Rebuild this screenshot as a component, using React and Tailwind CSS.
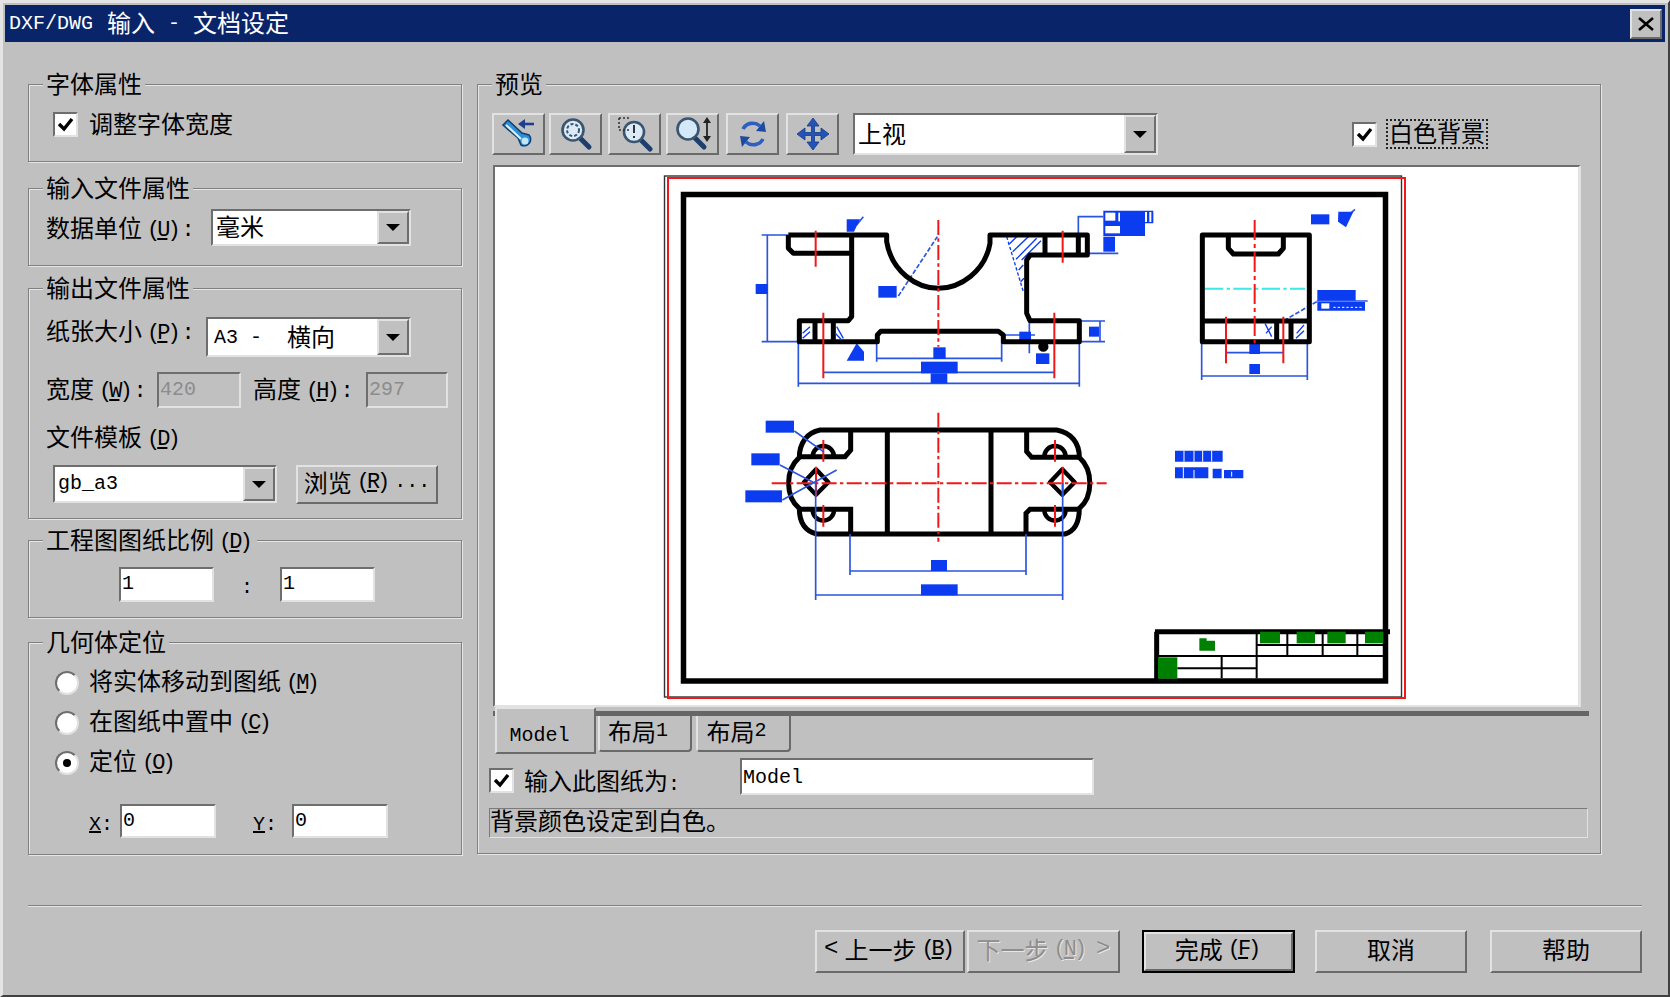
const BLUE = '#0b3cf0';
const LINE = '#2a55e0';
const RED = '#f01818';

function Latin({ children, className = '' }) {
  return <span className={`font-['Liberation_Mono'] text-[20px] ${className}`}>{children}</span>;
}

function Hot({ k, tail = '' }) {
  return (
    <span className="ml-[5px] font-['Liberation_Mono'] text-[22px] tracking-[-3px] align-[1px]">
      (<u>{k}</u>)<span className="ml-[4px]">{tail}</span>
    </span>
  );
}

function Group({ title, className = '', children }) {
  return (
    <div className={`relative border border-[#808080] shadow-[inset_1px_1px_0_#e6e6e6,1px_1px_0_#e6e6e6] ${className}`}>
      <div className="absolute -top-[17px] left-[14px] bg-[#c0c0c0] px-[3px] leading-[30px] whitespace-nowrap">
        {title}
      </div>
      {children}
    </div>
  );
}

function Sunken({ className = '', children }) {
  return (
    <div className={`border-2 border-t-[#6e6e6e] border-l-[#6e6e6e] border-b-[#e2e2e2] border-r-[#e2e2e2] ${className}`}>
      {children}
    </div>
  );
}

function Field({ value, className = '', disabled }) {
  return (
    <Sunken className={`flex items-center pl-[1px] ${disabled ? 'bg-[#c0c0c0]' : 'bg-white'} ${className}`}>
      <Latin className={disabled ? 'text-[#8c8c8c]' : ''}>{value}</Latin>
    </Sunken>
  );
}

function Combo({ className = '', children }) {
  return (
    <Sunken className={`flex bg-white ${className}`}>
      <div className="flex-1 flex items-center pl-[3px] pb-[3px] whitespace-nowrap">{children}</div>
      <div className="w-[32px] flex items-center justify-center bg-[#c0c0c0] border-2 border-t-[#e2e2e2] border-l-[#e2e2e2] border-r-[#6e6e6e] border-b-[#6e6e6e]">
        <div className="w-0 h-0 border-x-[7px] border-x-transparent border-t-[7px] border-t-black" />
      </div>
    </Sunken>
  );
}

function Check({ className = '' }) {
  return (
    <Sunken className={`w-[25px] h-[25px] bg-white flex items-center justify-center shrink-0 ${className}`}>
      <svg width="17" height="15" viewBox="0 0 17 15">
        <path d="M2 7 L7 12 L15 2" fill="none" stroke="#000" strokeWidth="3.4" />
      </svg>
    </Sunken>
  );
}

function Radio({ on, children }) {
  return (
    <div className="flex items-center gap-[10px] h-[24px]">
      <div className="w-[24px] h-[24px] rounded-full bg-white border-2 border-t-[#6e6e6e] border-l-[#6e6e6e] border-b-[#e2e2e2] border-r-[#e2e2e2] flex items-center justify-center">
        {on ? <div className="w-[8px] h-[8px] rounded-full bg-black" /> : null}
      </div>
      <div className="leading-[24px] pb-[2px] whitespace-nowrap">{children}</div>
    </div>
  );
}

function Btn({ className = '', children }) {
  return (
    <div className={`flex items-center justify-center bg-[#c0c0c0] border-2 border-t-[#e2e2e2] border-l-[#e2e2e2] border-r-[#6a6a6a] border-b-[#6a6a6a] whitespace-nowrap ${className}`}>
      {children}
    </div>
  );
}

function Glass({ children }) {
  return (
    <svg width="36" height="36" viewBox="0 0 36 36">
      <path d="M21 21 L31 31" stroke="#1c3f6e" strokeWidth="5" strokeLinecap="round" />
      <circle cx="15" cy="14" r="10.5" fill="#dbeaf6" stroke="#3a5570" strokeWidth="2.6" />
      {children}
    </svg>
  );
}

const toolIcons = [
  <svg key="a" width="36" height="36" viewBox="0 0 36 36">
    <path d="M2 9 L7 4 L21 17 L28 19 A6.5 6.5 0 0 1 20 29 L17 22 Z" fill="#2f8fd8" stroke="#14406e" strokeWidth="1.6" />
    <path d="M5 9 L20 23" stroke="#d7eefb" strokeWidth="2.2" />
    <circle cx="24" cy="25" r="3.5" fill="#bfe6fa" />
    <path d="M33 8 H20" fill="none" stroke="#1c3f8e" strokeWidth="2.6" />
    <path d="M24 3 L17 8 L24 13 Z" fill="#1c3f8e" />
  </svg>,
  <Glass key="b">
    <circle cx="15" cy="14" r="6" fill="none" stroke="#3a5570" strokeWidth="2" strokeDasharray="3 2" />
  </Glass>,
  <svg key="c" width="36" height="36" viewBox="0 0 36 36">
    <path d="M23 23 L33 33" stroke="#1c3f6e" strokeWidth="5" strokeLinecap="round" />
    <circle cx="17" cy="16" r="10" fill="#dbeaf6" stroke="#3a5570" strokeWidth="2.6" />
    <path d="M2 2 H14 M2 2 V14 M2 14 H14" fill="none" stroke="#333" strokeWidth="1.6" strokeDasharray="2 2" />
    <path d="M17 9 V17 M17 20 V22" stroke="#333" strokeWidth="2" />
  </svg>,
  <svg key="d" width="38" height="36" viewBox="0 0 38 36">
    <path d="M20 21 L30 31" stroke="#1c3f6e" strokeWidth="5" strokeLinecap="round" />
    <circle cx="14" cy="13" r="10.5" fill="#d3e8f8" stroke="#3a5570" strokeWidth="2.6" />
    <path d="M33 3 V24" stroke="#222" strokeWidth="1.8" />
    <path d="M29 7 L33 1 L37 7 Z M29 20 L33 26 L37 20 Z" fill="#222" />
  </svg>,
  <svg key="e" width="36" height="36" viewBox="0 0 36 36">
    <path d="M8 13 A11 11 0 0 1 25 10" fill="none" stroke="#2b5fc0" strokeWidth="3.6" />
    <path d="M21 15 L31 16 L29 5 Z" fill="#1e4a9e" />
    <path d="M28 23 A11 11 0 0 1 11 26" fill="none" stroke="#2b5fc0" strokeWidth="3.6" />
    <path d="M15 21 L5 20 L7 31 Z" fill="#1e4a9e" />
  </svg>,
  <svg key="f" width="36" height="36" viewBox="0 0 36 36">
    <path d="M18 2 L24 10 H19.5 V16.5 H26 V12 L34 18 L26 24 V19.5 H19.5 V26 H24 L18 34 L12 26 H16.5 V19.5 H10 V24 L2 18 L10 12 V16.5 H16.5 V10 H12 Z" fill="#2554b8" stroke="#143a86" strokeWidth="0.8" />
  </svg>,
];

const toolGaps = ['', 'ml-[4px]', 'ml-[6px]', 'ml-[5px]', 'ml-[7px]', 'ml-[7px]'];

function FrontView() {
  return (
    <g transform="translate(660 170) scale(0.33333)">
      <g fill="none" stroke={LINE} strokeWidth="5">
        <path d="M305 195 H385 M305 515 H415 M322 195 V515" />
        <path d="M715 378 L832 200" strokeDasharray="14 6" />
        <path d="M1255 195 V140 H1330 M1285 250 H1375 M1255 453 H1335 M1260 515 H1335 M1320 453 V515" />
        <path d="M650 515 V575 M1025 515 V575 M650 565 H1025 M490 607 H1185 M415 640 H1258 M415 515 V650 M1258 515 V650 M1108 450 V550 M1030 495 H1125 M1030 515 H1120" />
        <path d="M590 165 L610 140" />
      </g>
      <g fill={BLUE}>
        <rect x="287" y="342" width="36" height="30" />
        <rect x="655" y="348" width="55" height="35" />
        <path d="M560 148 H600 L582 185 H560 Z" />
        <path d="M1330 122 H1480 V160 H1455 V198 H1330 Z" />
        <rect x="1330" y="200" width="35" height="45" />
        <rect x="1287" y="470" width="30" height="30" />
        <rect x="820" y="532" width="37" height="35" />
        <rect x="783" y="575" width="110" height="35" />
        <rect x="812" y="610" width="50" height="30" />
        <path d="M560 572 L590 520 L612 545 V572 Z" />
        <rect x="1078" y="485" width="35" height="35" />
        <path d="M1128 550 H1168 V582 H1128 Z" />
      </g>
      <g fill="#fff">
        <rect x="1336" y="128" width="30" height="24" />
        <rect x="1336" y="168" width="44" height="22" />
        <rect x="1455" y="126" width="6" height="30" />
        <rect x="1468" y="126" width="6" height="30" />
        <rect x="1375" y="128" width="5" height="26" />
      </g>
      <g stroke={BLUE} strokeWidth="4" fill="none">
        <path d="M1048 222 L1070 200 M1058 245 L1105 200 M1068 268 L1130 205 M1085 270 L1143 212 M1076 300 L1090 285 M1082 335 L1092 325" />
        <path d="M1040 200 L1090 365" strokeDasharray="10 6" />
      </g>
      <g fill="none" stroke="#000" strokeWidth="15" strokeLinejoin="round">
        <path d="M385 195 H680 V215 C695 305 770 355 835 355 C900 355 975 305 990 220 V195 H1282 V255 H1110 L1100 270 V430 L1110 452 H1258 V515 H1030 V495 L1015 484 H662 L652 495 V515 H418 V452 H565 L575 440 V195" />
        <path d="M385 195 V235 L400 250 H570 M1155 195 V255 M1255 195 V255 M465 452 V515 M520 452 V515" />
        <circle cx="1150" cy="530" r="8" />
      </g>
      <g fill="#fff">
        <rect x="428" y="465" width="24" height="42" />
        <rect x="528" y="465" width="24" height="42" />
      </g>
      <g stroke={BLUE} strokeWidth="4" fill="none">
        <path d="M428 490 L450 470 M428 505 L450 485 M530 470 L550 505 M526 490 L545 510" />
      </g>
      <g stroke={RED} strokeWidth="6" fill="none">
        <path d="M835 150 V530" strokeDasharray="45 10 10 10" />
        <path d="M467 182 V290 M1208 182 V278 M490 428 V625 M1183 428 V625" />
      </g>
    </g>
  );
}

function TopView() {
  return (
    <g transform="translate(660 400) scale(0.33333)">
      <g fill="none" stroke="#000" strokeWidth="15">
        <path d="M480 90 H1190 C1235 98 1258 130 1258 172 C1300 210 1300 290 1258 325 C1258 375 1240 395 1215 402 H470 C440 395 418 375 418 325 C375 290 375 210 418 172 C418 130 440 98 480 90 Z" />
        <path d="M682 90 V402 M993 90 V402" />
        <path d="M572 95 V150 L555 170 H420 M572 402 V328 H420 M1100 95 V155 L1115 172 H1258 M1098 402 V340 L1110 328 H1258" />
        <path d="M458 170 A32 32 0 0 1 522 170 M458 330 A32 32 0 0 0 522 330 M1153 170 A32 32 0 0 1 1217 170 M1153 330 A32 32 0 0 0 1217 330" strokeWidth="13" />
        <path d="M468 208 L505 247 L468 284 L432 247 Z M1207 208 L1244 247 L1207 284 L1170 247 Z" strokeWidth="13" strokeLinejoin="round" />
      </g>
      <g fill="none" stroke={RED} strokeWidth="6">
        <path d="M335 250 H1340" strokeDasharray="45 10 10 10" />
        <path d="M835 38 V425" strokeDasharray="45 10 10 10" />
        <path d="M490 120 V185 M490 315 V380 M1185 120 V185 M1185 315 V380 M468 200 V290 M1208 200 V290" />
      </g>
      <g fill="none" stroke={LINE} strokeWidth="5">
        <path d="M467 250 V600 M1208 250 V600 M570 402 V525 M1098 402 V525 M570 513 H1098 M467 585 H1208" />
        <path d="M403 93 L490 155 M360 195 L465 250 M367 300 L530 210" />
      </g>
      <g fill={BLUE}>
        <rect x="813" y="480" width="48" height="33" />
        <rect x="783" y="553" width="110" height="33" />
        <rect x="317" y="62" width="85" height="36" />
        <rect x="274" y="160" width="85" height="36" />
        <rect x="256" y="271" width="110" height="36" />
      </g>
    </g>
  );
}

function SideView() {
  return (
    <g transform="translate(1100 170) scale(0.33333)">
      <g fill="none" stroke={LINE} strokeWidth="5">
        <path d="M305 515 V630 M622 515 V630 M378 548 H550 M303 618 H624" />
        <path d="M650 395 L555 450" strokeDasharray="14 6" />
        <path d="M650 393 H803 M740 140 L765 118" />
      </g>
      <g fill={BLUE}>
        <rect x="633" y="133" width="55" height="30" />
        <path d="M715 125 H760 L738 172 L714 155 Z" />
        <rect x="652" y="360" width="115" height="32" />
        <path d="M652 396 H795 V422 H652 Z" />
        <rect x="448" y="520" width="32" height="32" />
        <rect x="448" y="582" width="32" height="30" />
      </g>
      <rect x="664" y="400" width="24" height="16" fill="#fff" />
      <path d="M700 412 H790" stroke="#fff" strokeWidth="3" strokeDasharray="7 6" />
      <path d="M315 356 H615" stroke="#3ce8e8" strokeWidth="6" strokeDasharray="55 10 10 10" />
      <g fill="none" stroke="#000" strokeWidth="15" strokeLinejoin="round">
        <path d="M307 195 H628 V515 H307 Z" />
        <path d="M385 195 V235 L400 252 H535 L550 235 V195 M307 453 H628 M530 453 V515 M573 453 V515" />
      </g>
      <g stroke={BLUE} strokeWidth="4" fill="none">
        <path d="M495 460 L515 500 M498 490 L515 470 M590 490 L612 465 M588 505 L612 482" />
      </g>
      <g stroke={RED} strokeWidth="6" fill="none">
        <path d="M464 150 V520" strokeDasharray="60 12 12 12" />
        <path d="M378 440 V580 M550 440 V580" />
      </g>
    </g>
  );
}

function TitleBlock() {
  return (
    <g transform="translate(1100 420) scale(0.33333)">
      <g fill={BLUE}>
        <path d="M225 92 H368 V125 H225 Z" />
        <path d="M225 142 H325 V175 H225 Z M338 146 H365 V175 H338 Z M372 150 H430 V175 H372 Z" />
      </g>
      <g stroke="#fff" strokeWidth="3">
        <path d="M252 92 V125 M282 92 V125 M308 92 V125 M335 92 V125 M250 142 V175 M282 150 V175 M395 155 V170" />
      </g>
      <g fill="none" stroke="#000" strokeWidth="6">
        <path d="M470 635 V775 M170 708 H850 M232 745 H470 M365 708 V775 M470 675 H850 M562 640 V708 M668 640 V708 M772 640 V708" />
      </g>
      <path d="M165 635 H870 M170 635 V785" fill="none" stroke="#000" strokeWidth="15" />
      <g fill="#008000">
        <rect x="480" y="635" width="60" height="35" />
        <rect x="590" y="635" width="55" height="35" />
        <rect x="682" y="635" width="55" height="35" />
        <rect x="795" y="635" width="55" height="35" />
        <rect x="174" y="712" width="58" height="64" />
        <path d="M298 655 H320 V662 H345 V692 H298 Z" />
      </g>
    </g>
  );
}

function Drawing() {
  return (
    <svg width="1083" height="538" viewBox="495 167 1083 538" className="block">
      <rect x="495" y="167" width="1083" height="538" fill="#fff" />
      <rect x="664.5" y="176" width="737" height="521" fill="none" stroke="#333" strokeWidth="1.4" />
      <rect x="668" y="178" width="737" height="520" fill="none" stroke="#f01818" strokeWidth="2" />
      <rect x="683.5" y="194.5" width="702" height="486.5" fill="none" stroke="#000" strokeWidth="5.5" />
      <FrontView />
      <TopView />
      <SideView />
      <TitleBlock />
    </svg>
  );
}

export default function App() {
  return (
    <div className="h-screen w-full overflow-hidden bg-[#c0c0c0] text-[24px] text-black font-['Noto_Sans_CJK_SC','Liberation_Sans',sans-serif] border-t-[3px] border-l-[3px] border-r-2 border-b-2 border-t-[#e4e4e4] border-l-[#e4e4e4] border-r-[#404040] border-b-[#404040]">
      <div className="pt-[2px] pl-[2px] pr-[3px]">
        <div className="h-[37px] bg-[#0a246a] text-white flex items-center justify-between pl-[4px] pr-[2px] leading-none">
          <div className="flex items-center whitespace-nowrap">
            <Latin>DXF/DWG</Latin>
            <span className="ml-[14px] pb-[4px]">输入</span>
            <Latin className="ml-[13px]">-</Latin>
            <span className="ml-[13px] pb-[4px]">文档设定</span>
          </div>
          <Btn className="w-[32px] h-[30px] mr-[1px]">
            <svg width="18" height="14" viewBox="0 0 18 14">
              <path d="M2 1 L16 13 M16 1 L2 13" stroke="#000" strokeWidth="2.6" />
            </svg>
          </Btn>
        </div>

        <div className="flex pt-[42px] pl-[23px]">
          <div className="w-[434px] flex flex-col">
            <Group title="字体属性" className="h-[78px] pt-[27px] pl-[24px]">
              <div className="flex items-start gap-[11px]">
                <Check />
                <span className="h-[25px] leading-[21px]">调整字体宽度</span>
              </div>
            </Group>

            <Group title="输入文件属性" className="h-[78px] mt-[26px] pt-[20px] pl-[17px]">
              <div className="flex items-start">
                <div className="w-[165px] h-[36px] leading-[36px] whitespace-nowrap">
                  数据单位<Hot k="U" tail=":" />
                </div>
                <Combo className="w-[200px] h-[37px]">毫米</Combo>
              </div>
            </Group>

            <Group title="输出文件属性" className="h-[231px] mt-[22px] pt-[28px] pl-[17px]">
              <div className="flex items-start">
                <div className="w-[160px] h-[26px] leading-[26px] whitespace-nowrap">
                  纸张大小<Hot k="P" tail=":" />
                </div>
                <Combo className="w-[205px] h-[40px]">
                  <Latin className="ml-[3px] mt-[4px]">A3 -</Latin>
                  <span className="ml-[25px]">横向</span>
                </Combo>
              </div>
              <div className="flex items-center mt-[15px] h-[36px]">
                <div className="w-[111px] pb-[2px] whitespace-nowrap">
                  宽度<Hot k="W" tail=":" />
                </div>
                <Field value="420" disabled className="w-[84px] h-[36px]" />
                <div className="w-[113px] ml-[12px] pb-[2px] whitespace-nowrap">
                  高度<Hot k="H" tail=":" />
                </div>
                <Field value="297" disabled className="w-[82px] h-[36px]" />
              </div>
              <div className="mt-[15px] h-[26px] leading-[26px] whitespace-nowrap">
                文件模板<Hot k="D" />
              </div>
              <div className="flex mt-[16px] ml-[7px]">
                <Combo className="w-[224px] h-[38px]">
                  <Latin className="mt-[3px]">gb_a3</Latin>
                </Combo>
                <Btn className="w-[142px] h-[39px] ml-[19px] pb-[5px]">
                  浏览<Hot k="R" />
                  <Latin className="ml-[3px]">...</Latin>
                </Btn>
              </div>
            </Group>

            <Group
              title={
                <span>
                  工程图图纸比例<Hot k="D" />
                </span>
              }
              className="h-[78px] mt-[21px] pt-[24px] pl-[90px]"
            >
              <div className="flex items-center">
                <Field value="1" className="w-[95px] h-[35px]" />
                <div className="w-[66px] text-center">
                  <Latin>:</Latin>
                </div>
                <Field value="1" className="w-[95px] h-[35px]" />
              </div>
            </Group>

            <Group title="几何体定位" className="h-[213px] mt-[24px] pt-[28px] pl-[26px]">
              <div className="flex flex-col gap-[16px]">
                <Radio>
                  将实体移动到图纸<Hot k="M" />
                </Radio>
                <Radio>
                  在图纸中置中<Hot k="C" />
                </Radio>
                <Radio on>
                  定位<Hot k="O" />
                </Radio>
              </div>
              <div className="flex items-center mt-[27px] ml-[34px]">
                <div className="w-[31px]">
                  <Latin>
                    <u>X</u>:
                  </Latin>
                </div>
                <Field value="0" className="w-[96px] h-[34px]" />
                <div className="w-[39px] ml-[37px]">
                  <Latin>
                    <u>Y</u>:
                  </Latin>
                </div>
                <Field value="0" className="w-[96px] h-[34px]" />
              </div>
            </Group>
          </div>

          <Group title="预览" className="w-[1124px] h-[770px] ml-[15px] pt-[28px]">
            <div className="flex items-center pl-[14px]">
              {toolIcons.map((icon, i) => (
                <Btn key={i} className={`w-[53px] h-[42px] ${toolGaps[i]}`}>
                  {icon}
                </Btn>
              ))}
              <Combo className="w-[305px] h-[42px] ml-[14px]">上视</Combo>
              <Check className="ml-[194px]" />
              <div className="ml-[9px] w-[102px] h-[30px] leading-[22px] text-center border-2 border-dotted border-[#222]">
                白色背景
              </div>
            </div>

            <Sunken className="w-[1088px] mt-[10px] ml-[15px] border-r-[3px] border-b-2">
              <Drawing />
            </Sunken>

            <div className="w-[1096px] h-[43px] mt-[4px] ml-[15px] border-t-[5px] border-t-[#666] flex items-start pl-[2px]">
              <Btn className="relative w-[101px] h-[47px] -mt-[9px] pt-[10px] pr-[12px] border-t-[#e2e2e2] rounded-t-[2px]">
                <Latin>Model</Latin>
              </Btn>
              <Btn className="w-[94px] h-[36px] ml-[2px] border-t-0 rounded-b-[4px] pb-[4px] pr-[14px]">
                布局<Latin>1</Latin>
              </Btn>
              <Btn className="w-[95px] h-[36px] ml-[4px] border-t-0 rounded-b-[4px] pb-[4px] pr-[14px]">
                布局<Latin>2</Latin>
              </Btn>
            </div>

            <div className="flex items-start h-[37px] mt-[4px] pl-[11px]">
              <Check className="mt-[10px]" />
              <span className="mt-[7px] ml-[10px] w-[216px] leading-[30px] whitespace-nowrap">
                输入此图纸为<Latin>:</Latin>
              </span>
              <Field value="Model" className="w-[354px] h-[37px] pt-[3px]" />
            </div>

            <div className="w-[1099px] h-[30px] mt-[13px] ml-[11px] leading-[22px] border border-t-[#7a7a7a] border-l-[#7a7a7a] border-b-[#e2e2e2] border-r-[#e2e2e2] whitespace-nowrap">
              背景颜色设定到白色。
            </div>
          </Group>
        </div>

        <div className="h-[2px] mt-[50px] ml-[23px] mr-[23px] bg-[#808080] border-b border-b-[#e6e6e6]" />

        <div className="flex justify-end mt-[23px] mr-[23px]">
          <Btn className="w-[150px] h-[43px] pb-[5px]">
            <Latin className="text-[24px]">&lt;</Latin>
            <span className="ml-[6px]">上一步</span>
            <Hot k="B" />
          </Btn>
          <Btn className="w-[153px] h-[43px] ml-[2px] pb-[5px] text-[#8e8e8e] [text-shadow:1px_1px_0_#e6e6e6]">
            <span>下一步</span>
            <Hot k="N" />
            <Latin className="ml-[8px] text-[24px]">&gt;</Latin>
          </Btn>
          <div className="w-[153px] h-[43px] ml-[22px] border-2 border-black">
            <Btn className="w-full h-full pb-[5px]">
              完成<Hot k="F" />
            </Btn>
          </div>
          <Btn className="w-[152px] h-[43px] ml-[20px] pb-[5px]">取消</Btn>
          <Btn className="w-[152px] h-[43px] ml-[23px] pb-[5px]">帮助</Btn>
        </div>
      </div>
    </div>
  );
}
